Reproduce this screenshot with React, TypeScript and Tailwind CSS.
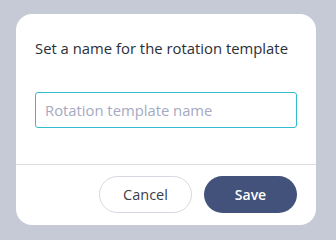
import React from "react";

export default function App() {
  return (
    <div className="w-[336px] h-[240px] bg-[#c6cad7] pt-[14px] pl-[16px] overflow-hidden" style={{ fontFamily: '"Open Sans", "Noto Sans", sans-serif' }}>
      <div className="w-[300px] h-[211px] bg-white rounded-[16px] flex flex-col">
        <div className="px-[19px] pt-[23px] h-[150px]">
          <div className="text-[14.85px] leading-[22px] text-[#2b2f38]">Set a name for the rotation template</div>
          <input
            className="mt-[33px] w-[262px] h-[36px] border border-[#32bccf] rounded-[3px] px-[9px] text-[14.8px] text-[#2b2f38] placeholder:text-[#a5aac2] outline-none"
            placeholder="Rotation template name"
          />
        </div>
        <div className="h-px bg-[#dcdde3]" />
        <div className="flex justify-end gap-[12px] pr-[19px] pt-[11px]">
          <button className="w-[93px] h-[37px] rounded-full border border-[#d6d8df] bg-white text-[14.5px] text-[#3a3e48]">Cancel</button>
          <button className="w-[93px] h-[37px] rounded-full bg-[#42527b] text-white text-[14px] font-semibold">Save</button>
        </div>
      </div>
    </div>
  );
}
